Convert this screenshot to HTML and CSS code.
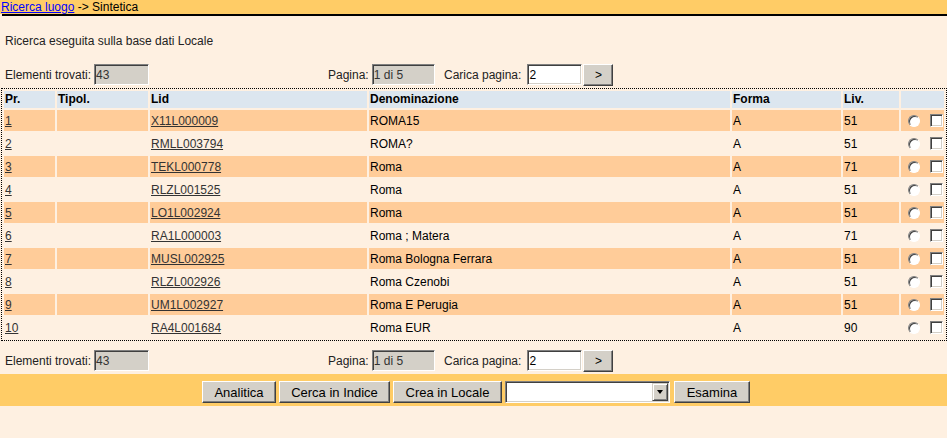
FILE: index.html
```html
<!DOCTYPE html>
<html lang="it">
<head>
<meta charset="utf-8">
<title>Sintetica</title>
<link rel="stylesheet" href="styles.css">
</head>
<body>
<div class="topbar"><a href="#" class="crumb">Ricerca luogo</a> -&gt; Sintetica</div>
<div class="rule"></div>
<p class="info">Ricerca eseguita sulla base dati Locale</p>

<div class="pager">
  <div class="pg pg-found"><span>Elementi trovati:</span><input class="fld ro w55" value="43" readonly></div>
  <div class="pg pg-page"><span>Pagina:</span><input class="fld ro w63" value="1 di 5" readonly></div>
  <div class="pg pg-load"><span>Carica pagina:</span><input class="fld w55" value="2"><button class="btn go">&gt;</button></div>
</div>

<table class="results">
  <thead>
    <tr>
      <th class="c-pr">Pr.</th>
      <th class="c-tip">Tipol.</th>
      <th class="c-lid">Lid</th>
      <th class="c-den">Denominazione</th>
      <th class="c-for">Forma</th>
      <th class="c-liv">Liv.</th>
      <th class="c-sel"></th>
    </tr>
  </thead>
  <tbody>
    <tr class="odd"><td><a href="#">1</a></td><td></td><td><a href="#">X11L000009</a></td><td>ROMA15</td><td>A</td><td>51</td><td class="sel"><input type="radio" name="s" class="rd"><input type="checkbox" class="cb"></td></tr>
    <tr class="even"><td><a href="#">2</a></td><td></td><td><a href="#">RMLL003794</a></td><td>ROMA?</td><td>A</td><td>51</td><td class="sel"><input type="radio" name="s" class="rd"><input type="checkbox" class="cb"></td></tr>
    <tr class="odd"><td><a href="#">3</a></td><td></td><td><a href="#">TEKL000778</a></td><td>Roma</td><td>A</td><td>71</td><td class="sel"><input type="radio" name="s" class="rd"><input type="checkbox" class="cb"></td></tr>
    <tr class="even"><td><a href="#">4</a></td><td></td><td><a href="#">RLZL001525</a></td><td>Roma</td><td>A</td><td>51</td><td class="sel"><input type="radio" name="s" class="rd"><input type="checkbox" class="cb"></td></tr>
    <tr class="odd"><td><a href="#">5</a></td><td></td><td><a href="#">LO1L002924</a></td><td>Roma</td><td>A</td><td>51</td><td class="sel"><input type="radio" name="s" class="rd"><input type="checkbox" class="cb"></td></tr>
    <tr class="even"><td><a href="#">6</a></td><td></td><td><a href="#">RA1L000003</a></td><td>Roma ; Matera</td><td>A</td><td>71</td><td class="sel"><input type="radio" name="s" class="rd"><input type="checkbox" class="cb"></td></tr>
    <tr class="odd"><td><a href="#">7</a></td><td></td><td><a href="#">MUSL002925</a></td><td>Roma Bologna Ferrara</td><td>A</td><td>51</td><td class="sel"><input type="radio" name="s" class="rd"><input type="checkbox" class="cb"></td></tr>
    <tr class="even"><td><a href="#">8</a></td><td></td><td><a href="#">RLZL002926</a></td><td>Roma Czenobi</td><td>A</td><td>51</td><td class="sel"><input type="radio" name="s" class="rd"><input type="checkbox" class="cb"></td></tr>
    <tr class="odd"><td><a href="#">9</a></td><td></td><td><a href="#">UM1L002927</a></td><td>Roma E Perugia</td><td>A</td><td>51</td><td class="sel"><input type="radio" name="s" class="rd"><input type="checkbox" class="cb"></td></tr>
    <tr class="even"><td><a href="#">10</a></td><td></td><td><a href="#">RA4L001684</a></td><td>Roma EUR</td><td>A</td><td>90</td><td class="sel"><input type="radio" name="s" class="rd"><input type="checkbox" class="cb"></td></tr>
  </tbody>
</table>

<div class="pager pager-bottom">
  <div class="pg pg-found"><span>Elementi trovati:</span><input class="fld ro w55" value="43" readonly></div>
  <div class="pg pg-page"><span>Pagina:</span><input class="fld ro w63" value="1 di 5" readonly></div>
  <div class="pg pg-load"><span>Carica pagina:</span><input class="fld w55" value="2"><button class="btn go">&gt;</button></div>
</div>

<div class="actions">
  <button class="btn act b-ana">Analitica</button>
  <button class="btn act b-cer">Cerca in Indice</button>
  <button class="btn act b-cre">Crea in Locale</button>
  <span class="combo"><select class="sel-box"><option></option></select><span class="combo-arrow"></span></span>
  <button class="btn act b-esa">Esamina</button>
</div>
</body>
</html>
```

FILE: styles.css
```css
html, body {
  margin: 0;
  padding: 0;
  background: #fef0e1;
}
body {
  font-family: "Liberation Sans", Arial, sans-serif;
  font-size: 12px;
  color: #222;
  line-height: 14px;
}
.topbar {
  background: #ffcc66;
  height: 14px;
  line-height: 14px;
  padding-left: 1px;
  color: #000;
}
.crumb {
  color: #0000ff;
  text-decoration: underline;
}
.rule {
  height: 2px;
  background: #000;
  margin-left: 2px;
}
.info {
  margin: 18px 0 0 5px;
  line-height: 14px;
}
.pager {
  display: flex;
  align-items: center;
  margin-top: 16px;
  padding-left: 5px;
  height: 21px;
}
.pager-bottom {
  margin-top: 9px;
}
.pg {
  display: flex;
  align-items: center;
}
.pg span {
  margin-right: 3px;
}
.pg-load span {
  margin-right: 6px;
}
.pg-found {
  width: 323px;
}
.pg-page {
  width: 116px;
}
.fld {
  box-sizing: border-box;
  height: 21px;
  padding: 0 0 0 1px;
  margin: 0;
  font-family: "Liberation Sans", Arial, sans-serif;
  font-size: 12px;
  color: #000;
  background: #fff;
  border: 1px solid;
  border-color: #808080 #fff #fff #808080;
  box-shadow: inset 1px 1px #404040, inset -1px -1px #d4d0c8;
  outline: none;
}
.fld.ro {
  background: #d4d0c8;
  color: #333;
}
.w55 { width: 55px; }
.w63 { width: 63px; }
.btn {
  box-sizing: border-box;
  background: #d4d0c8;
  border: 1px solid;
  border-color: #fff #404040 #404040 #fff;
  box-shadow: inset -1px -1px #808080;
  font-family: "Liberation Sans", Arial, sans-serif;
  font-size: 13px;
  color: #000;
  padding: 0;
  margin: 0;
  border-radius: 0;
}
.go {
  width: 30px;
  height: 22px;
  margin-left: 1px;
  font-size: 12px;
}
.results {
  margin: 3px 0 0 1px;
  width: 946px;
  table-layout: fixed;
  border: 1px dotted #000;
  border-spacing: 2px;
  color: #000;
}
.results th, .results td {
  box-sizing: border-box;
  padding: 1px;
  text-align: left;
  vertical-align: middle;
  white-space: nowrap;
  overflow: hidden;
}
.results th {
  background: #dce6ef;
  font-weight: bold;
  height: 17px;
  line-height: 15px;
}
.c-pr { width: 51px; }
.c-tip { width: 91px; }
.c-lid { width: 217px; }
.c-den { width: 361px; }
.c-for { width: 109px; }
.c-liv { width: 56px; }
.c-sel { width: 43px; }
.results td {
  height: 21px;
}
.results tr.odd td { background: #ffcc99; }
.results tr.even td { background: #fef0e1; }
.results a {
  color: #333;
  text-decoration: underline;
}
.results td.sel {
  font-size: 0;
  line-height: 0;
}
.rd {
  appearance: none;
  -webkit-appearance: none;
  box-sizing: border-box;
  width: 12px;
  height: 12px;
  margin: 0 0 0 6px;
  border: 1px solid;
  border-color: #808080 #fff #fff #808080;
  border-radius: 50%;
  background: #fff;
  box-shadow: inset 1px 1px #404040;
  vertical-align: middle;
}
.cb {
  appearance: none;
  -webkit-appearance: none;
  box-sizing: border-box;
  width: 13px;
  height: 13px;
  margin: 0 0 0 10px;
  border: 1px solid;
  border-color: #808080 #fff #fff #808080;
  background: #fff;
  box-shadow: inset 1px 1px #404040, inset -1px -1px #d4d0c8;
  vertical-align: middle;
  border-radius: 0;
}
.actions {
  margin-top: 3px;
  background: #ffcc66;
  height: 32px;
  box-sizing: border-box;
  padding: 7px 0 0 5px;
  display: flex;
  justify-content: center;
  align-items: flex-start;
  gap: 3px;
}
.act {
  height: 22px;
}
.b-ana { width: 74px; }
.b-cer { width: 111px; }
.b-cre { width: 109px; }
.b-esa { width: 76px; margin-left: 1px; }
.combo {
  position: relative;
  display: block;
  width: 165px;
  height: 22px;
}
.sel-box {
  appearance: none;
  -webkit-appearance: none;
  box-sizing: border-box;
  width: 165px;
  height: 22px;
  margin: 0;
  border: 1px solid;
  border-color: #808080 #fff #fff #808080;
  box-shadow: inset 1px 1px #404040, inset -1px -1px #d4d0c8;
  background: #fff;
  border-radius: 0;
  font-family: "Liberation Sans", Arial, sans-serif;
  font-size: 12px;
  outline: none;
}
.combo-arrow {
  position: absolute;
  right: 2px;
  top: 2px;
  width: 16px;
  height: 18px;
  box-sizing: border-box;
  background: #d4d0c8;
  border: 1px solid;
  border-color: #d4d0c8 #404040 #404040 #d4d0c8;
  box-shadow: inset 1px 1px #fff, inset -1px -1px #808080;
}
.combo-arrow::after {
  content: "";
  position: absolute;
  left: 4px;
  top: 6px;
  border-left: 3.5px solid transparent;
  border-right: 3.5px solid transparent;
  border-top: 4px solid #000;
}
```
